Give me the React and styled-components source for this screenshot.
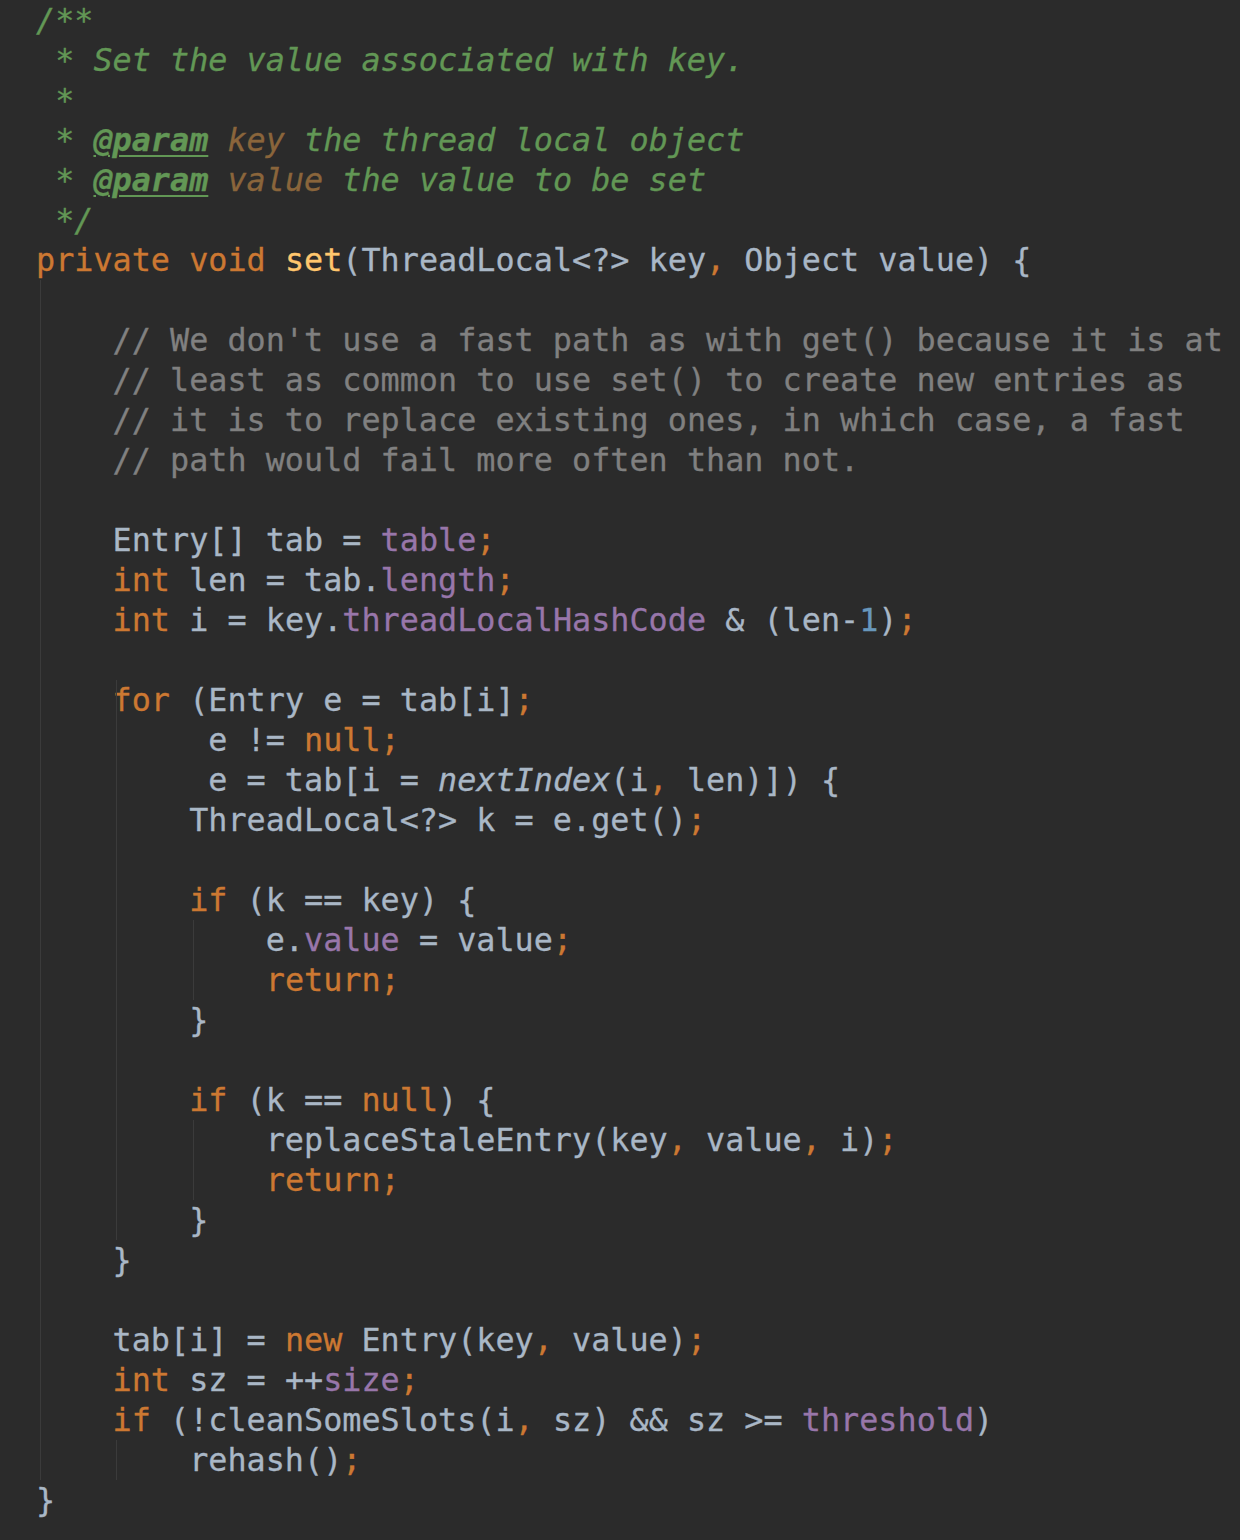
import React from "react";
import styled, { createGlobalStyle, css } from "styled-components";

const CHAR_W = 19.14;
const LEFT = 36;

const Global = createGlobalStyle`
  html, body { margin: 0; padding: 0; background: #2b2b2b; }
  #root { min-height: 1540px; background: #2b2b2b; }
`;

const Editor = styled.div`
  background: #2b2b2b;
  width: 1240px;
  height: 1540px;
  overflow: hidden;
  padding-left: ${LEFT}px;
  box-sizing: border-box;
  font-family: "DejaVu Sans Mono", "Liberation Mono", monospace;
  font-size: 31.8px;
  color: #a9b7c6;
  -webkit-text-stroke: 0.3px currentColor;
`;

const Line = styled.div`
  position: relative;
  height: 40px;
  line-height: 40px;
  white-space: pre;
`;

const Guide = styled.span`
  position: absolute;
  top: 0;
  bottom: 0;
  width: 1px;
  background: #3b3b3b;
`;

const colors = {
  id: "#a9b7c6",
  kw: "#cc7832",
  fn: "#ffc66d",
  field: "#9876aa",
  num: "#6897bb",
  comment: "#808080",
  doc: "#629755",
  tag: "#629755",
  dparam: "#8a653b",
  italic: "#a9b7c6",
};

const Tok = styled.span`
  color: ${(p) => colors[p.$k] || colors.id};
  -webkit-text-stroke: 0.3px ${(p) => colors[p.$k] || colors.id};
  ${(p) =>
    (p.$k === "doc" || p.$k === "dparam" || p.$k === "italic") &&
    css`
      font-style: italic;
    `}
  ${(p) =>
    p.$k === "tag" &&
    css`
      font-style: italic;
      font-weight: bold;
      text-decoration: underline;
      text-underline-offset: 4px;
      text-decoration-thickness: 2px;
    `}
`;

const L = (...toks) => toks;
const t = (k, s) => ({ k, s });

const lines = [
  L(t("doc", "/**")),
  L(t("doc", " * Set the value associated with key.")),
  L(t("doc", " *")),
  L(t("doc", " * "), t("tag", "@param"), t("doc", " "), t("dparam", "key"), t("doc", " the thread local object")),
  L(t("doc", " * "), t("tag", "@param"), t("doc", " "), t("dparam", "value"), t("doc", " the value to be set")),
  L(t("doc", " */")),
  L(
    t("kw", "private void "),
    t("fn", "set"),
    t("id", "(ThreadLocal<?> key"),
    t("kw", ","),
    t("id", " Object value) {")
  ),
  L(),
  L(t("id", "    "), t("comment", "// We don't use a fast path as with get() because it is at")),
  L(t("id", "    "), t("comment", "// least as common to use set() to create new entries as")),
  L(t("id", "    "), t("comment", "// it is to replace existing ones, in which case, a fast")),
  L(t("id", "    "), t("comment", "// path would fail more often than not.")),
  L(),
  L(t("id", "    Entry[] tab = "), t("field", "table"), t("kw", ";")),
  L(t("id", "    "), t("kw", "int"), t("id", " len = tab."), t("field", "length"), t("kw", ";")),
  L(
    t("id", "    "),
    t("kw", "int"),
    t("id", " i = key."),
    t("field", "threadLocalHashCode"),
    t("id", " & (len-"),
    t("num", "1"),
    t("id", ")"),
    t("kw", ";")
  ),
  L(),
  L(t("id", "    "), t("kw", "for"), t("id", " (Entry e = tab[i]"), t("kw", ";")),
  L(t("id", "         e != "), t("kw", "null;")),
  L(
    t("id", "         e = tab[i = "),
    t("italic", "nextIndex"),
    t("id", "(i"),
    t("kw", ","),
    t("id", " len)]) {")
  ),
  L(t("id", "        ThreadLocal<?> k = e.get()"), t("kw", ";")),
  L(),
  L(t("id", "        "), t("kw", "if"), t("id", " (k == key) {")),
  L(t("id", "            e."), t("field", "value"), t("id", " = value"), t("kw", ";")),
  L(t("id", "            "), t("kw", "return;")),
  L(t("id", "        }")),
  L(),
  L(t("id", "        "), t("kw", "if"), t("id", " (k == "), t("kw", "null"), t("id", ") {")),
  L(
    t("id", "            replaceStaleEntry(key"),
    t("kw", ","),
    t("id", " value"),
    t("kw", ","),
    t("id", " i)"),
    t("kw", ";")
  ),
  L(t("id", "            "), t("kw", "return;")),
  L(t("id", "        }")),
  L(t("id", "    }")),
  L(),
  L(
    t("id", "    tab[i] = "),
    t("kw", "new"),
    t("id", " Entry(key"),
    t("kw", ","),
    t("id", " value)"),
    t("kw", ";")
  ),
  L(t("id", "    "), t("kw", "int"), t("id", " sz = ++"), t("field", "size"), t("kw", ";")),
  L(
    t("id", "    "),
    t("kw", "if"),
    t("id", " (!cleanSomeSlots(i"),
    t("kw", ","),
    t("id", " sz) && sz >= "),
    t("field", "threshold"),
    t("id", ")")
  ),
  L(t("id", "        rehash()"), t("kw", ";")),
  L(t("id", "}")),
];

// indent guides: column, first line index, last line index
const guides = [
  { col: 0, from: 7, to: 36 },
  { col: 4, from: 17, to: 30 },
  { col: 8, from: 23, to: 24 },
  { col: 8, from: 28, to: 29 },
  { col: 4, from: 36, to: 36 },
];

export default function App() {
  return (
    <>
      <Global />
      <Editor>
        {lines.map((toks, i) => (
          <Line key={i}>
            {guides
              .filter((g) => i >= g.from && i <= g.to)
              .map((g, j) => (
                <Guide key={j} style={{ left: g.col * CHAR_W + 3.5 }} />
              ))}
            {toks.length === 0
              ? " "
              : toks.map((tk, j) => (
                  <Tok key={j} $k={tk.k}>
                    {tk.s}
                  </Tok>
                ))}
          </Line>
        ))}
      </Editor>
    </>
  );
}
